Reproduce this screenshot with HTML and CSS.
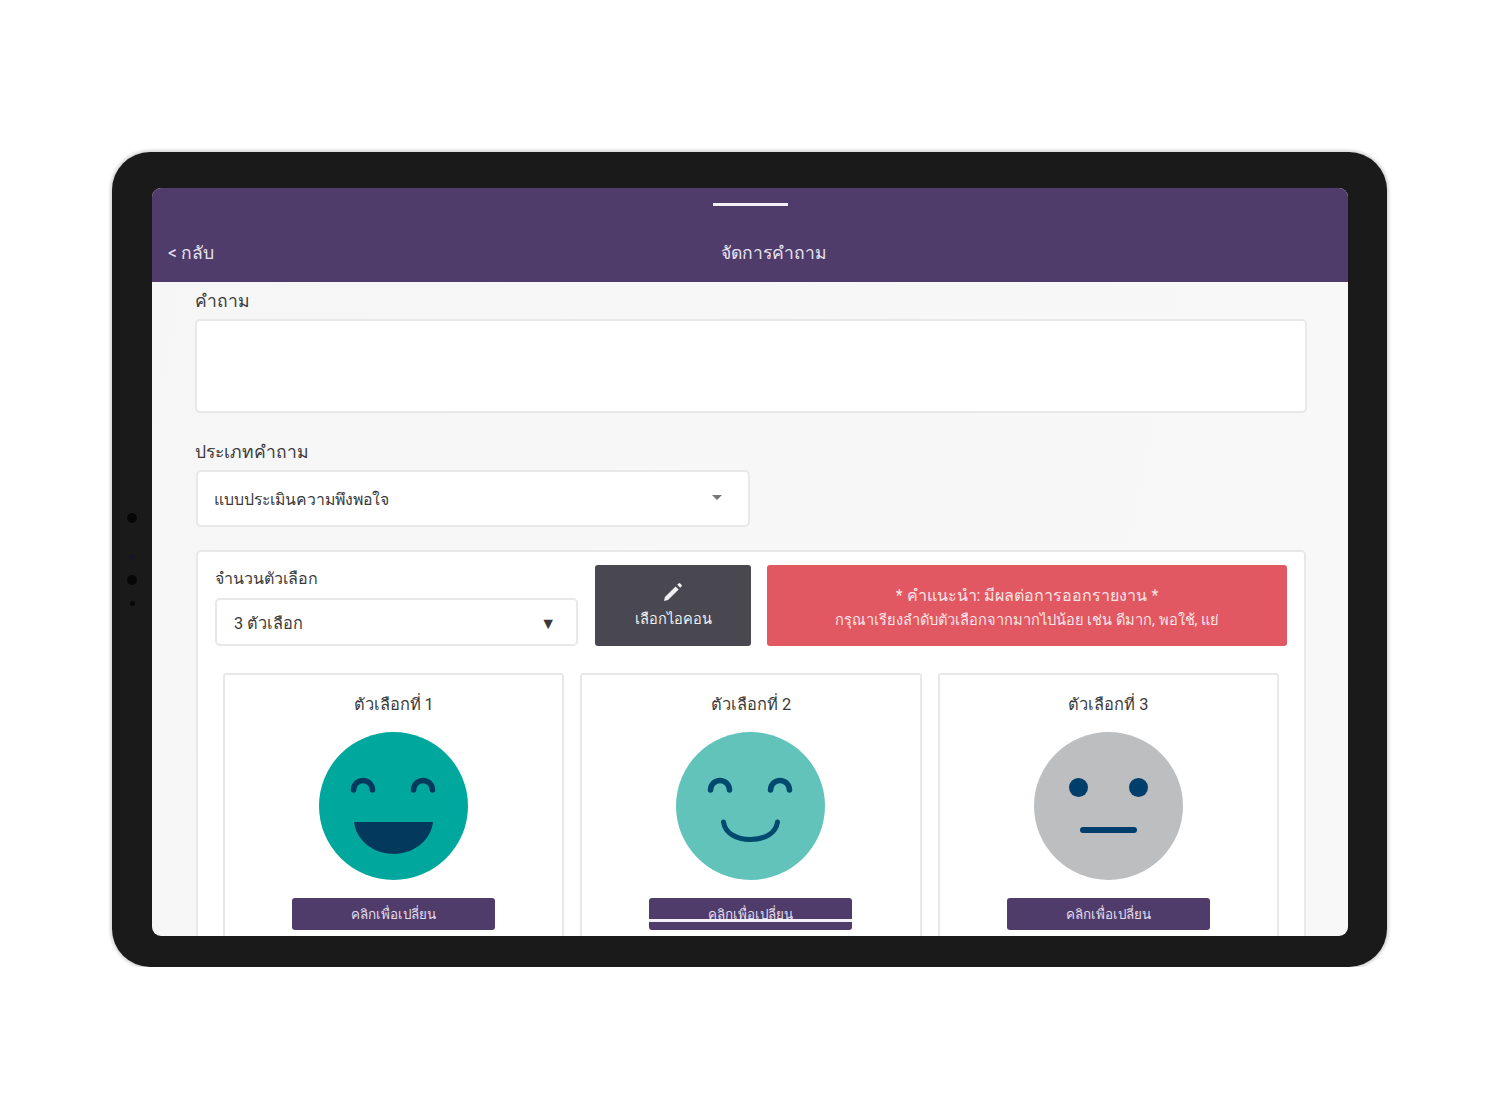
FILE: index.html
```html
<!DOCTYPE html>
<html lang="th">
<head>
  <meta charset="UTF-8" />
  <meta name="viewport" content="width=device-width, initial-scale=1.0" />
  <title>จัดการคำถาม</title>
  <link rel="stylesheet" href="styles.css">
</head>
<body>

  <div class="tablet">
    <!-- camera dots on the bezel -->
    <span class="tablet__dot tablet__dot--one"></span>
    <span class="tablet__dot tablet__dot--two"></span>
    <span class="tablet__dot tablet__dot--three"></span>
    <span class="tablet__dot tablet__dot--four"></span>

    <div class="screen">
      <span class="screen__handle"></span>

      <header class="topbar">
        <span class="topbar__back">&lt; กลับ</span>
        <span class="topbar__title">จัดการคำถาม</span>
      </header>

      <main class="form">
        <div class="form__label">คำถาม</div>
        <div class="question-box"></div>

        <div class="form__label form__label--type">ประเภทคำถาม</div>
        <div class="type-select">
          <span>แบบประเมินความพึงพอใจ</span>
          <span class="type-select__caret"></span>
        </div>

        <section class="panel">
          <div class="panel__top">
            <div class="count-field">
              <div class="count-field__label">จำนวนตัวเลือก</div>
              <div class="count-select">
                <span>3 ตัวเลือก</span>
                <span class="count-select__caret">▼</span>
              </div>
            </div>

            <div class="icon-button">
              <svg class="icon-button__pencil" viewBox="0 0 20 20" fill="currentColor" xmlns="http://www.w3.org/2000/svg">
                <path d="M1 19l.9-4L12.6 4.4l3.1 3L5 18.1z"></path>
                <path d="M14.2 2.8l1.3-1.3a1.2 1.2 0 0 1 1.7 0l1.3 1.3a1.2 1.2 0 0 1 0 1.7l-1.3 1.3z"></path>
              </svg>
              <span>เลือกไอคอน</span>
            </div>

            <div class="hint">
              <div class="hint__title">* คำแนะนำ: มีผลต่อการออกรายงาน *</div>
              <div class="hint__text">กรุณาเรียงลำดับตัวเลือกจากมากไปน้อย เช่น ดีมาก, พอใช้, แย่</div>
            </div>
          </div>

          <div class="choices">
            <div class="choice">
              <div class="choice__title">ตัวเลือกที่ 1</div>
              <svg class="choice__face" viewBox="0 0 149 148" fill="none" xmlns="http://www.w3.org/2000/svg">
                <ellipse cx="74.5" cy="74" rx="74.5" ry="74" fill="#00a79d"></ellipse>
                <path d="M34.5 58a9.5 9.5 0 0 1 19 0M94.5 58a9.5 9.5 0 0 1 19 0" stroke="#04395e" stroke-width="5.5" stroke-linecap="round"></path>
                <path d="M35 90H114C112 108 95 122 74.5 122C54 122 37 108 35 90Z" fill="#04395e"></path>
              </svg>
              <div class="choice__button">คลิกเพื่อเปลี่ยน</div>
            </div>

            <div class="choice">
              <div class="choice__title">ตัวเลือกที่ 2</div>
              <svg class="choice__face" viewBox="0 0 149 148" fill="none" xmlns="http://www.w3.org/2000/svg">
                <ellipse cx="74.5" cy="74" rx="74.5" ry="74" fill="#62c3ba"></ellipse>
                <path d="M34.5 58a9.5 9.5 0 0 1 19 0M94.5 58a9.5 9.5 0 0 1 19 0" stroke="#00496f" stroke-width="5.5" stroke-linecap="round"></path>
                <path d="M47.5 90C49 101 60 107.5 74.5 107.5C89 107.5 100 101 101.5 90" stroke="#00496f" stroke-width="5" stroke-linecap="round"></path>
              </svg>
              <div class="choice__button choice__button--lined">คลิกเพื่อเปลี่ยน</div>
            </div>

            <div class="choice">
              <div class="choice__title">ตัวเลือกที่ 3</div>
              <svg class="choice__face" viewBox="0 0 149 148" fill="none" xmlns="http://www.w3.org/2000/svg">
                <ellipse cx="74.5" cy="74" rx="74.5" ry="74" fill="#bcbec0"></ellipse>
                <circle cx="44.5" cy="55.5" r="9.5" fill="#003f6b"></circle>
                <circle cx="104.5" cy="55.5" r="9.5" fill="#003f6b"></circle>
                <rect x="46" y="95" width="57" height="6" rx="3" fill="#003f6b"></rect>
              </svg>
              <div class="choice__button">คลิกเพื่อเปลี่ยน</div>
            </div>
          </div>
        </section>
      </main>
    </div>
  </div>

</body>
</html>
```

FILE: styles.css
```css
:root {
  --purple: #4f3c6b;
  --text: #3a3a3a;
  --line: #e8e8e8;
}

* {
  box-sizing: border-box;
}

body {
  margin: 0;
  padding-top: 152px;
  background: #fff;
  font-family: "Roboto", "Noto Sans", "Liberation Sans", "DejaVu Sans", sans-serif;
  font-size: 17px;
  color: var(--text);
}

/* Device frame */
.tablet {
  position: relative;
  width: 1275px;
  height: 815px;
  margin-left: 112px;
  padding: 36px 39px 31px 40px;
  background: #1a1a1a;
  border-radius: 38px;
  box-shadow: 0 0 3px 2px #d8d8d8;
}

.tablet__dot {
  position: absolute;
  left: 15px;
  width: 10px;
  height: 10px;
  border-radius: 50%;
  background: #070707;
}

.tablet__dot--one { top: 361px; }
.tablet__dot--two { top: 403px; width: 4px; height: 4px; left: 18px; background: #14143a; }
.tablet__dot--three { top: 423px; }
.tablet__dot--four { top: 449px; width: 5px; height: 5px; left: 18px; }

.screen {
  position: relative;
  height: 748px;
  overflow: hidden;
  background: linear-gradient(100deg, #f6f6f6, #f8f8f8);
  border-radius: 9px;
}

.screen__handle {
  position: absolute;
  top: 15px;
  left: 561px;
  width: 75px;
  height: 3px;
  background: #f2eff6;
}

/* Header */
.topbar {
  display: flex;
  align-items: flex-end;
  height: 94px;
  padding: 0 16px 15px;
  background: var(--purple);
  color: #e9e4f0;
  font-size: 17.5px;
}

.topbar__title {
  flex: 1;
  padding-left: 2px;
  text-align: center;
}

/* Form */
.form {
  padding: 7px 41px 0 43px;
}

.form__label {
  height: 30px;
  font-size: 17.5px;
  line-height: 25px;
}

.form__label--type {
  margin-top: 27px;
}

.question-box {
  height: 94px;
  background: #fff;
  border: 2px solid var(--line);
  border-radius: 5px;
}

.type-select {
  display: flex;
  align-items: center;
  justify-content: space-between;
  width: 554px;
  height: 57px;
  margin-left: 1px;
  padding: 2px 26px 0 16px;
  background: #fff;
  border: 2px solid var(--line);
  border-radius: 5px;
  font-size: 15.8px;
}

.type-select__caret {
  width: 0;
  height: 0;
  margin-bottom: 5px;
  border-left: 5px solid transparent;
  border-right: 5px solid transparent;
  border-top: 5px solid #777;
}

/* Panel with option count and choices */
.panel {
  width: 1110px;
  margin: 23px 0 0 1px;
  padding: 13px 17px 40px;
  background: #fff;
  border: 2px solid var(--line);
  border-radius: 5px;
}

.panel__top {
  display: flex;
  gap: 17px;
  height: 81px;
}

.count-field {
  width: 363px;
}

.count-field__label {
  height: 33px;
  font-size: 16px;
  line-height: 27px;
}

.count-select {
  display: flex;
  align-items: center;
  justify-content: space-between;
  height: 48px;
  padding: 2px 20px 0 17px;
  border: 2px solid var(--line);
  border-radius: 5px;
  font-size: 16.3px;
}

.count-select__caret {
  font-size: 16px;
}

.icon-button {
  display: flex;
  flex-direction: column;
  align-items: center;
  justify-content: center;
  gap: 5px;
  width: 156px;
  background: #49474f;
  border-radius: 3px;
  color: #f0f0f0;
  font-size: 14.6px;
}

.icon-button__pencil {
  width: 20px;
  height: 20px;
}

.hint {
  display: flex;
  flex-direction: column;
  align-items: center;
  justify-content: center;
  width: 520px;
  margin-left: -1px;
  padding-top: 5px;
  background: #e15762;
  border-radius: 3px;
  color: #fbe6e7;
  font-size: 16px;
  line-height: 24px;
}

.hint__text {
  font-size: 14.6px;
}

.choices {
  display: flex;
  gap: 16px;
  margin: 27px 8px 0;
}

.choice {
  display: flex;
  flex-direction: column;
  align-items: center;
  flex: 1;
  height: 300px;
  padding-top: 16px;
  border: 2px solid var(--line);
  border-radius: 3px;
}

.choice__title {
  height: 41px;
  font-size: 16.4px;
  line-height: 27px;
}

.choice__face {
  display: block;
  width: 149px;
  height: 148px;
}

.choice__button {
  position: relative;
  width: 203px;
  height: 32px;
  margin-top: 18px;
  background: var(--purple);
  border-radius: 3px;
  color: #e4deec;
  font-size: 13.4px;
  line-height: 33px;
  text-align: center;
}

/* stray white line over the middle button */
.choice__button--lined::after {
  content: "";
  position: absolute;
  left: 0;
  right: 0;
  top: 21px;
  height: 3px;
  background: #f4f0f8;
}
```
